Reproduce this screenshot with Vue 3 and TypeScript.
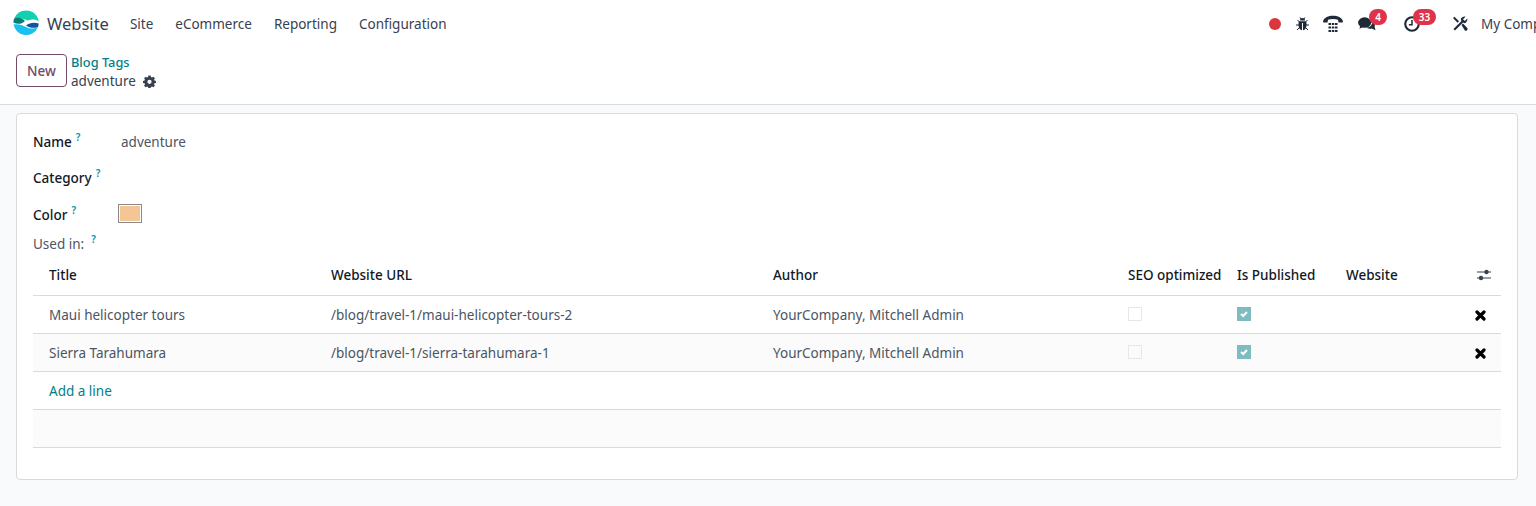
<script setup lang="ts">
interface Row { title: string; url: string; author: string }
const rows: Row[] = [
  { title: 'Maui helicopter tours', url: '/blog/travel-1/maui-helicopter-tours-2', author: 'YourCompany, Mitchell Admin' },
  { title: 'Sierra Tarahumara', url: '/blog/travel-1/sierra-tarahumara-1', author: 'YourCompany, Mitchell Admin' },
]
const menus = ['Site', 'eCommerce', 'Reporting', 'Configuration']
</script>

<template>
  <div class="page">
    <header class="nav">
      <div class="nav-left">
        <svg class="logo" width="26" height="26" viewBox="0 0 26 26">
          <path d="M1.200 8.500A12.800 12.800 0 0 1 25 8.500C25.300 9.500 25.600 10.500 25.700 11.500C22 8.500 18 9.500 14.500 10.500C10 9 5 6.500 1.200 8.500Z" fill="#10d2b0" />
          <path d="M.4 12.500C.4 10.500.8 9.500 1.200 8.500C5 6.500 9 8 12 11C8.500 14.500 4 14.500.4 12.500Z" fill="#0c7d73" />
          <path d="M13 15.500C16.500 12.500 21.500 12 25.700 13.500C25.600 15 25.400 16 25 17C21 18.500 16.500 18 13 15.500Z" fill="#14549f" />
          <path d="M.5 14.500C5 13.500 9.500 15 13 17C17 19 21 19 25 17A12.800 12.800 0 0 1 .5 14.500Z" fill="#19c1f1" />
        </svg>
        <span class="brand">Website</span>
        <span v-for="m in menus" :key="m" class="menu">{{ m }}</span>
      </div>
      <div class="nav-right">
        <span class="dot"></span>
        <svg class="bug" width="13" height="14" viewBox="0 0 13 14" fill="#1f2937">
          <path d="M4 3.500A2.500 2.500 0 0 1 9 3.500ZM3.200 4.300H9.800C10.500 5 10.500 6 10.500 8C10.500 11 9 13 7 13.300V6H6V13.300C4 13 2.500 11 2.500 8C2.500 6 2.500 5 3.200 4.300Z" />
          <path d="M1.500 3L3.500 5M11.500 3L9.500 5M0 8H3M10 8H13M1 13L3.500 10.500M12 13L9.500 10.500M4.200 .5L5 2M8.800 .5L8 2" stroke="#1f2937" fill="none" stroke-width="1" />
        </svg>
        <svg class="voip" width="20" height="18" viewBox="0 0 20 18" fill="#1f2937">
          <path d="M0 6.500C1 2.500 5.500 .8 10 .8C14.500 .8 19 2.500 20 6.500L19.500 7.500L15.500 7.500L15 4.800C12 3.800 8 3.800 5 4.800L4.500 7.500L.5 7.500Z" />
          <rect x="5.500" y="8" width="2.500" height="2" /><rect x="8.800" y="8" width="2.500" height="2" /><rect x="12" y="8" width="2.500" height="2" />
          <rect x="5.500" y="11.500" width="2.500" height="2" /><rect x="8.800" y="11.500" width="2.500" height="2" /><rect x="12" y="11.500" width="2.500" height="2" />
          <rect x="5.500" y="15" width="2.500" height="2" /><rect x="8.800" y="15" width="2.500" height="2" /><rect x="12" y="15" width="2.500" height="2" />
        </svg>
        <span class="badged chat">
          <svg width="18" height="16" viewBox="0 0 19 16" fill="#1f2937">
            <ellipse cx="7" cy="6.500" rx="7" ry="5.500" />
            <path d="M2.500 9.500L1.500 13L6 11Z" />
            <path d="M15 6C17.500 7 18.500 9 17.500 11L18.500 14.500L14.500 12.800C12.500 13.300 10.500 13 9 12C12.500 12 15 9.500 15 6Z" />
          </svg>
          <span class="badge b1">4</span>
        </span>
        <span class="badged clock">
          <svg width="16" height="16" viewBox="0 0 18 18" fill="none" stroke="#1f2937">
            <circle cx="9" cy="9" r="7.600" stroke-width="2.400" />
            <path d="M9 4.500V9.800H5.500" stroke-width="1.700" />
          </svg>
          <span class="badge b2">33</span>
        </span>
        <svg class="tools" width="16" height="16" viewBox="0 0 16 16" fill="#1f2937">
          <path d="M1.500 13L9.500 5L8.700 3.200C9.500 1.500 11.500.3 13.500.7L11 3.200L12.800 5L15.300 2.500C15.700 4.500 14.500 6.500 12.800 7.300L11 6.500L3 14.500Z" />
          <path d="M1 2L2.500.8L7 5.300L5.500 6.800ZM9.500 9L11 7.500L15.300 12C15.700 12.800 15.700 13.500 15 14.300C14.300 15 13.300 15 12.700 14.300Z" />
        </svg>
        <span class="company">My Company</span>
      </div>
    </header>

    <section class="control">
      <button class="btn-new" type="button">New</button>
      <div class="crumbs">
        <a class="crumb-link">Blog Tags</a>
        <div class="crumb-current">
          <span>adventure</span>
          <svg width="13" height="13" viewBox="0 0 14 14" fill="#374151">
            <path fill-rule="evenodd" d="M5.800.5H8.200L8.600 2.200L9.700 2.700L11.200 1.800L12.800 3.500L11.900 5L12.300 6L14 6.400V8.600L12.300 9L11.900 10L12.800 11.500L11.200 13.200L9.700 12.300L8.600 12.800L8.200 14H5.800L5.400 12.800L4.300 12.300L2.800 13.200L1.200 11.500L2.100 10L1.700 9L0 8.600V6.400L1.700 6L2.100 5L1.200 3.500L2.800 1.800L4.300 2.700L5.400 2.200ZM7 5A2.300 2.300 0 1 0 7 9.600A2.300 2.300 0 1 0 7 5Z" />
          </svg>
        </div>
      </div>
    </section>

    <main class="content">
      <div class="sheet">
        <div class="field f-name">
          <label class="lbl">Name<sup class="help">?</sup></label>
          <span class="val">adventure</span>
        </div>
        <div class="field f-cat">
          <label class="lbl">Category<sup class="help">?</sup></label>
        </div>
        <div class="field f-color">
          <label class="lbl">Color<sup class="help">?</sup></label>
          <span class="swatch"><i></i></span>
        </div>
        <div class="used">Used in:<sup class="help h2">?</sup></div>

        <div class="table">
          <div class="tr th">
            <div class="c first">Title</div>
            <div class="c">Website URL</div>
            <div class="c">Author</div>
            <div class="c">SEO optimized</div>
            <div class="c">Is Published</div>
            <div class="c">Website</div>
            <div class="c end">
              <svg class="opt" width="16" height="14" viewBox="0 0 16 14" fill="#374151">
                <rect x="1" y="3.500" width="14" height="1" /><rect x="1" y="9.500" width="14" height="1" />
                <circle cx="10.500" cy="4" r="2.200" /><circle cx="5" cy="10" r="2.200" />
              </svg>
            </div>
          </div>
          <div v-for="(r, i) in rows" :key="r.url" class="tr td" :class="{ odd: i === 1 }">
            <div class="c first">{{ r.title }}</div>
            <div class="c">{{ r.url }}</div>
            <div class="c">{{ r.author }}</div>
            <div class="c"><span class="cb"></span></div>
            <div class="c">
              <span class="cb on">
                <svg width="10" height="10" viewBox="0 0 10 10" fill="none" stroke="#fff" stroke-width="2"><path d="M2 5L4.200 7L8 3" /></svg>
              </span>
            </div>
            <div class="c"></div>
            <div class="c end">
              <svg class="del" width="11" height="11" viewBox="0 0 11 11" stroke="#000" stroke-width="3.200" stroke-linecap="round"><path d="M2 2L9 9M9 2L2 9" /></svg>
            </div>
          </div>
          <div class="add"><a>Add a line</a></div>
          <div class="foot"></div>
        </div>
      </div>
    </main>
  </div>
</template>

<style>
html, body { margin: 0; background: #f9fafb; overflow: hidden; }
</style>

<style scoped>
.page {
  width: 1536px; height: 506px; overflow: hidden; background: #f9fafb; color: #374151;
  font-family: "Noto Sans", "Open Sans", sans-serif; font-size: 13.5px; line-height: 21px;
}
.nav {
  height: 46px; background: #fff; display: flex; justify-content: space-between; align-items: center;
  padding-left: 13px; box-sizing: border-box; white-space: nowrap;
}
.nav-left { display: flex; align-items: center; }
.logo { margin-right: 8px; }
.brand { font-size: 16.500px; margin-right: 21px; color: #374151; }
.menu { margin-right: 22px; color: #374151; padding-top: 2px; }
.nav-right { display: flex; align-items: center; width: 267px; flex: none; margin-top: 1px; }
.dot { width: 12px; height: 12px; border-radius: 50%; background: #d9363e; margin-right: 15px; flex: none; }
.bug { margin-right: 14px; flex: none; }
.voip { margin-right: 15px; flex: none; }
.badged { position: relative; display: inline-flex; flex: none; }
.chat { margin-right: 28px; }
.clock { margin-right: 32px; }
.badge {
  position: absolute; background: #e0334a; color: #fff; font-size: 10px; font-weight: 600; line-height: 16px; height: 16px;
  border-radius: 8px; text-align: center;
}
.b1 { left: 11px; top: -7px; width: 18px; }
.b2 { left: 9px; top: -7px; width: 23px; }
.tools { margin-right: 13px; flex: none; }
.company { flex: none; padding-top: 1px; }

.control {
  height: 59px; background: #fff; border-bottom: 1px solid #d8dadd; box-sizing: border-box;
  display: flex; align-items: flex-start; padding: 8px 16px 0;
}
.btn-new {
  width: 51px; height: 33px; box-sizing: border-box; border: 1px solid #714b67; border-radius: 4px; background: #fff;
  color: #714b67; font: 500 13.500px "Noto Sans", sans-serif; padding: 0; margin-right: 4px;
}
.crumbs { display: flex; flex-direction: column; }
.crumb-link { color: #017e84; font-size: 12.800px; font-weight: 500; line-height: 18px; margin: -1px 0 1px; }
.crumb-current { display: flex; align-items: center; gap: 7px; line-height: 18px; }

.content { padding: 8px 18px 0 16px; }
.sheet {
  height: 367px; box-sizing: border-box; background: #fff; border: 1px solid #d8dadd; border-radius: 4px;
  padding: 0 16px;
}
.field { display: flex; }
.lbl { width: 88px; font-weight: 500; color: #111827; flex: none; }
.help { color: #0891b2; font-size: 10px; font-weight: 600; margin-left: 4px; line-height: 0; vertical-align: 6px; }
.f-name { padding-top: 18px; height: 37px; box-sizing: border-box; }
.f-cat { padding-top: 17px; height: 37px; box-sizing: border-box; }
.f-color { padding-top: 17px; height: 44px; box-sizing: border-box; }
.val { color: #4b5563; }
.swatch {
  display: block; width: 24px; height: 19px; margin: -1px 0 0 -3px; box-sizing: border-box; border: 1px solid #8a8a8a; padding: 1px; background: #fff;
}
.swatch i { display: block; height: 100%; background: #f4c595; }
.used { color: #4b5563; padding-top: 2px; height: 21px; }
.h2 { margin-left: 7px; }
.tr { display: grid; grid-template-columns: 294px 442px 355px 109px 109px 118px 41px; white-space: nowrap; }
.c { padding-left: 4px; display: flex; align-items: center; }
.first { padding-left: 16px; }
.end { padding-left: 0; justify-content: center; }
.opt { margin-left: 6px; margin-bottom: 1px; }
.del { margin-top: 0; }
.th { height: 41px; border-bottom: 1px solid #d8dadd; box-sizing: border-box; font-weight: 500; color: #111827; }
.td { height: 38px; padding-top: 2px; border-bottom: 1px solid #d8dadd; box-sizing: border-box; color: #4b5563; }
.odd { background: #fbfbfb; }
.cb { width: 14px; height: 14px; box-sizing: border-box; border: 1px solid #e5e7eb; display: flex; align-items: center; justify-content: center; margin-top: -4px; }
.on { background: #7fbcbf; border-color: #7fbcbf; }
.add { height: 38px; padding-top: 2px; box-sizing: border-box; border-bottom: 1px solid #d8dadd; padding-left: 16px; display: flex; align-items: center; color: #017e84; }
.foot { height: 38px; box-sizing: border-box; border-bottom: 1px solid #d8dadd; background: #fbfbfb; }
</style>
